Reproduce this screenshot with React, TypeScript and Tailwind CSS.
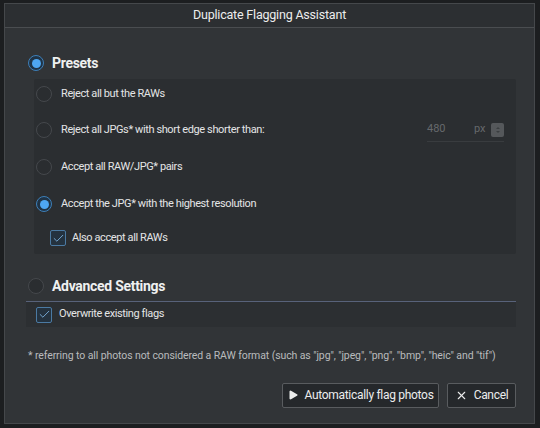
import { Check, Play, X } from 'lucide-react'

function Radio({ on }: { on?: boolean }) {
  return on ? (
    <span className="w-[16px] h-[16px] shrink-0 rounded-full border-[1.5px] border-[#3d7fb8] bg-[#1f3346] flex items-center justify-center">
      <span className="w-[9px] h-[9px] rounded-full bg-[#4ea6f2]" />
    </span>
  ) : (
    <span className="w-[16px] h-[16px] shrink-0 rounded-full border-[1.5px] border-[#45484c] bg-[#2a2d30]" />
  )
}

function CheckBox() {
  return (
    <span className="w-[16px] h-[16px] shrink-0 rounded-[2px] border border-[#4b7aa3] bg-[#24323f] flex items-center justify-center">
      <Check size={13} strokeWidth={1.6} color="#7fb6e6" />
    </span>
  )
}

function Option({ label, on, className = '' }: { label: string; on?: boolean; className?: string }) {
  return (
    <div className={`h-[24px] flex items-center gap-[9px] pl-[2px] ${className}`}>
      <Radio on={on} />
      <span className="text-[11px] tracking-[-0.4px] text-[#e4e5e6]">{label}</span>
    </div>
  )
}

export default function App() {
  return (
    <div
      className="w-[540px] h-[428px] bg-[#1c1e20] pt-[3px] pl-[4px] overflow-hidden"
      style={{ fontFamily: 'Roboto, "Liberation Sans", sans-serif' }}
    >
      <div className="w-[531px] h-[421px] bg-[#313437] border border-[#45484b] flex flex-col">
        {/* title bar */}
        <div className="h-[24px] shrink-0 bg-[#2c2f32] border-b border-[#4a4d50] flex items-center justify-center">
          <span className="text-[12.5px] tracking-[-0.2px] text-[#eceded]">Duplicate Flagging Assistant</span>
        </div>

        <div className="pl-[21px] pr-[18px]">
          {/* presets */}
          <div className="mt-[25px] h-[20px] flex items-center gap-[8px] pl-[2px]">
            <Radio on />
            <span className="text-[14px] tracking-[-0.3px] font-bold text-[#eff0f0]">Presets</span>
          </div>

          <div className="mt-[6px] ml-[8px] h-[175px] bg-[#2b2e31] rounded-[2px] pt-[3px]">
            <Option label="Reject all but the RAWs" />
            <div className="mt-[12px] h-[24px] flex items-center">
              <Option label="Reject all JPGs* with short edge shorter than:" className="flex-1" />
              <div className="w-[77px] mr-[12px] h-[24px] flex items-center border-b border-[#393c3f]">
                <span className="w-[47px] text-[11px] text-[#66696c]">480</span>
                <span className="w-[12px] text-[11px] text-[#66696c]">px</span>
                <span className="ml-[5px] w-[13px] h-[14px] rounded-[2px] bg-[#55585b] flex flex-col items-center justify-center gap-[2px]">
                  <span className="w-0 h-0 border-x-[2px] border-x-transparent border-b-[2px] border-b-[#3b3e41]" />
                  <span className="w-0 h-0 border-x-[2px] border-x-transparent border-t-[2px] border-t-[#3b3e41]" />
                </span>
              </div>
            </div>
            <Option label="Accept all RAW/JPG* pairs" className="mt-[13px]" />
            <Option label="Accept the JPG* with the highest resolution" on className="mt-[13px]" />
            <div className="mt-[10px] h-[24px] flex items-center gap-[6px] pl-[16px]">
              <CheckBox />
              <span className="text-[11px] tracking-[-0.4px] text-[#e4e5e6]">Also accept all RAWs</span>
            </div>
          </div>

          {/* advanced settings */}
          <div className="mt-[22px] h-[20px] flex items-center gap-[8px] pl-[2px]">
            <Radio />
            <span className="text-[14px] tracking-[-0.3px] font-bold text-[#eff0f0]">Advanced Settings</span>
          </div>
          <div className="mt-[5px] border-t-[1.5px] border-[#58627a]" />
          <div className="h-[25px] bg-[#2c2f32] flex items-center gap-[7px] pl-[10px]">
            <CheckBox />
            <span className="text-[11px] tracking-[-0.4px] text-[#e4e5e6]">Overwrite existing flags</span>
          </div>

          <p className="mt-[21px] pl-[2px] text-[10.5px] tracking-[-0.1px] text-[#b9bbbd] whitespace-nowrap">
            * referring to all photos not considered a RAW format (such as "jpg", "jpeg", "png", "bmp", "heic" and "tif")
          </p>

          <div className="mt-[19px] flex justify-end gap-[8px]">
            <button className="w-[157px] h-[25px] rounded-[2px] border border-[#595c5f] bg-[#25282b] flex items-center justify-center gap-[5px] text-[12px] tracking-[-0.3px] text-[#eceded] whitespace-nowrap">
              <Play size={12} fill="#eceded" strokeWidth={0} />
              Automatically flag photos
            </button>
            <button className="w-[69px] h-[25px] rounded-[2px] border border-[#595c5f] bg-[#25282b] flex items-center justify-center gap-[6px] text-[12px] tracking-[-0.3px] text-[#eceded] whitespace-nowrap">
              <X size={13} strokeWidth={2} />
              Cancel
            </button>
          </div>
        </div>
      </div>
    </div>
  )
}
